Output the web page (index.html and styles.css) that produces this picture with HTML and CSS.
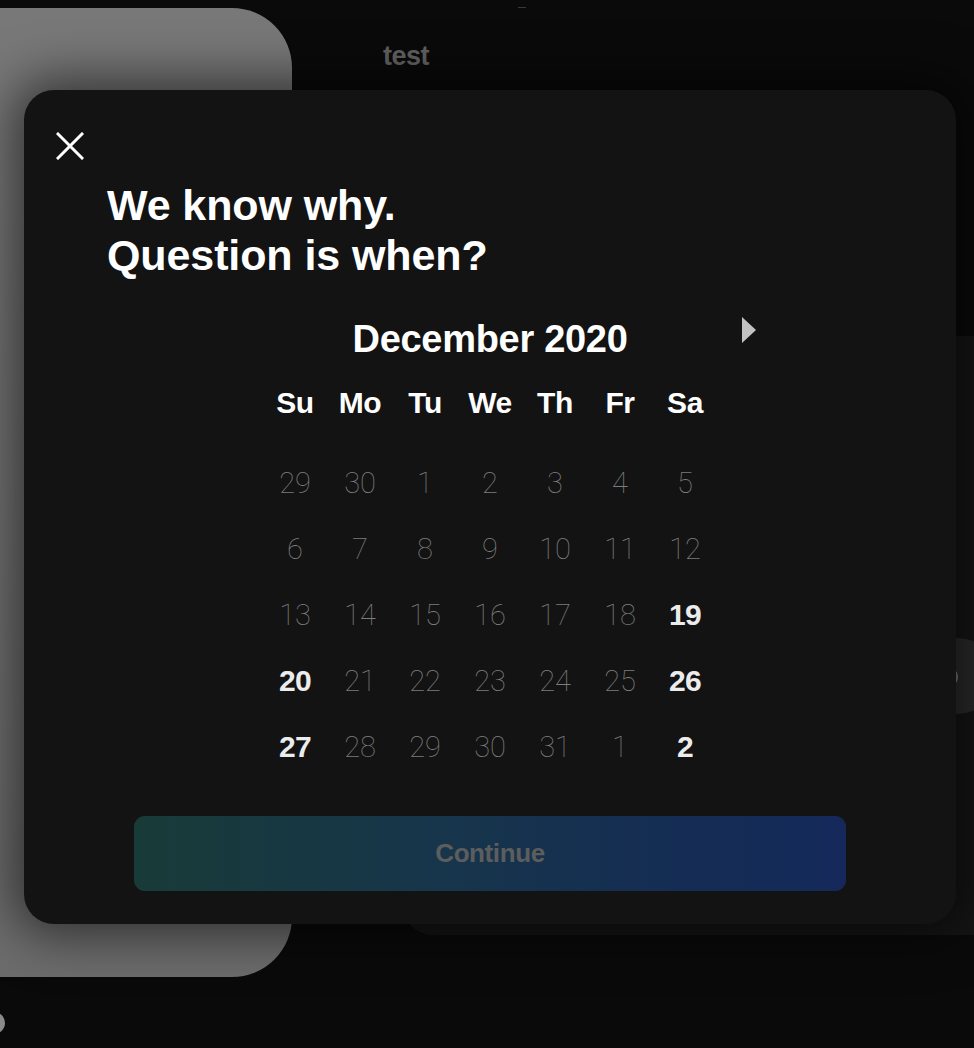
FILE: index.html
```html
<!DOCTYPE html>
<html lang="en">
<head>
<meta charset="utf-8">
<title>When</title>
<link rel="stylesheet" href="styles.css">
</head>
<body>
<div class="desk">
  <div class="win win-gray"></div>
  <div class="win win-dark">
    <div class="disc"><div class="disc-core"></div></div>
  </div>
  <div class="tick"></div>
  <div class="label-test">test</div>
  <div class="dot"></div>

  <div class="modal">
    <button class="close" aria-label="Close">
      <svg width="28" height="28" viewBox="0 0 28 28"><path d="M2 2 L26 26 M26 2 L2 26" stroke="#fff" stroke-width="3" stroke-linecap="square" fill="none"/></svg>
    </button>
    <h1 class="title">We know why.<br>Question is when?</h1>
    <div class="cal">
      <div class="cal-head">
        <span></span>
        <h2 class="month">December 2020</h2>
        <button class="next" aria-label="Next month">
          <svg width="14" height="26" viewBox="0 0 14 26"><path d="M0 0 L14 13 L0 26 Z" fill="#c2c2c2"/></svg>
        </button>
      </div>
      <div class="grid">
        <div class="wd">Su</div><div class="wd">Mo</div><div class="wd">Tu</div><div class="wd">We</div><div class="wd">Th</div><div class="wd">Fr</div><div class="wd">Sa</div>
        <div class="d">29</div><div class="d">30</div><div class="d">1</div><div class="d">2</div><div class="d">3</div><div class="d">4</div><div class="d">5</div>
        <div class="d">6</div><div class="d">7</div><div class="d">8</div><div class="d">9</div><div class="d">10</div><div class="d">11</div><div class="d">12</div>
        <div class="d">13</div><div class="d">14</div><div class="d">15</div><div class="d">16</div><div class="d">17</div><div class="d">18</div><div class="d on">19</div>
        <div class="d on">20</div><div class="d">21</div><div class="d">22</div><div class="d">23</div><div class="d">24</div><div class="d">25</div><div class="d on">26</div>
        <div class="d on">27</div><div class="d">28</div><div class="d">29</div><div class="d">30</div><div class="d">31</div><div class="d">1</div><div class="d on">2</div>
      </div>
    </div>
    <button class="continue">Continue</button>
  </div>
</div>
</body>
</html>
```
FILE: styles.css
```css
* { box-sizing: border-box; }
html, body { margin: 0; padding: 0; }
body {
  background: #0a0a0a;
  font-family: "Liberation Sans", Arial, Helvetica, sans-serif;
  overflow: hidden;
}
.desk {
  position: relative;
  width: 974px;
  height: 1048px;
  overflow: hidden;
}
.win { position: absolute; }
.win-gray {
  left: -60px;
  top: 8px;
  width: 352px;
  height: 969px;
  border-radius: 60px;
  background: linear-gradient(180deg, #787878 0%, #737373 50%, #6c6c6c 100%);
}
.win-dark {
  left: 400px;
  top: 336px;
  width: 600px;
  height: 599px;
  border-radius: 34px 0 0 34px;
  background: #151515;
  overflow: hidden;
}
.disc {
  position: absolute;
  left: 520px;
  top: 302px;
  width: 76px;
  height: 76px;
  border-radius: 50%;
  background: #2b2b2b;
}
.disc-core {
  position: absolute;
  left: 14px;
  top: 28px;
  width: 24px;
  height: 22px;
  border-radius: 50%;
  background: #7a7a7a;
}
.tick {
  position: absolute;
  left: 518px;
  top: 7px;
  width: 8px;
  height: 1px;
  background: #3a3a3a;
}
.label-test {
  position: absolute;
  left: 383px;
  top: 41px;
  font-size: 27px;
  line-height: 30px;
  font-weight: 700;
  letter-spacing: -0.5px;
  color: #626262;
}
.dot {
  position: absolute;
  left: -17px;
  top: 1012px;
  width: 22px;
  height: 22px;
  border-radius: 50%;
  background: #8a8a8a;
}

.modal {
  position: absolute;
  left: 24px;
  top: 90px;
  width: 932px;
  height: 834px;
  border-radius: 30px;
  background: #131313;
  box-shadow: 0 0 50px 12px rgba(0, 0, 0, 0.55);
  display: flex;
  flex-direction: column;
  padding-top: 42px;
}
button {
  font-family: inherit;
  border: 0;
  background: none;
  padding: 0;
  cursor: pointer;
}
.close {
  width: 28px;
  height: 28px;
  margin-left: 32px;
  display: block;
}
.close svg { display: block; }
.title {
  margin: 20px 0 0 83px;
  font-size: 43px;
  line-height: 50px;
  font-weight: 700;
  letter-spacing: -0.1px;
  color: #fff;
}
.cal {
  align-self: center;
  margin-top: 37px;
  display: flex;
  flex-direction: column;
  align-items: center;
}
.cal-head {
  width: 532px;
  display: grid;
  grid-template-columns: 1fr auto 1fr;
  align-items: start;
}
.month {
  margin: 0;
  font-size: 38px;
  line-height: 44px;
  font-weight: 700;
  letter-spacing: -0.3px;
  color: #fff;
}
.next {
  justify-self: end;
  width: 14px;
  height: 26px;
}
.next svg { display: block; }
.grid {
  margin-top: 25px;
  display: grid;
  grid-template-columns: repeat(7, 65px);
  grid-auto-rows: 66px;
  grid-template-rows: 64px;
  text-align: center;
}
.wd {
  font-size: 30px;
  line-height: 34px;
  font-weight: 700;
  letter-spacing: -0.4px;
  color: #fff;
}
.d {
  font-family: "Roboto", "Liberation Sans", sans-serif;
  font-size: 29px;
  line-height: 66px;
  font-weight: 100;
  color: #7e7e7e;
}
.d.on {
  font-family: "Liberation Sans", Arial, sans-serif;
  font-size: 30px;
  font-weight: 700;
  color: #ececec;
  letter-spacing: -0.6px;
}
.continue {
  align-self: center;
  margin-top: 36px;
  width: 712px;
  height: 75px;
  border-radius: 11px;
  background: linear-gradient(90deg, #183b38 0%, #17364a 40%, #152e52 70%, #14295a 100%);
  color: #5d5d5d;
  font-size: 26px;
  font-weight: 700;
  letter-spacing: -0.4px;
}
```
